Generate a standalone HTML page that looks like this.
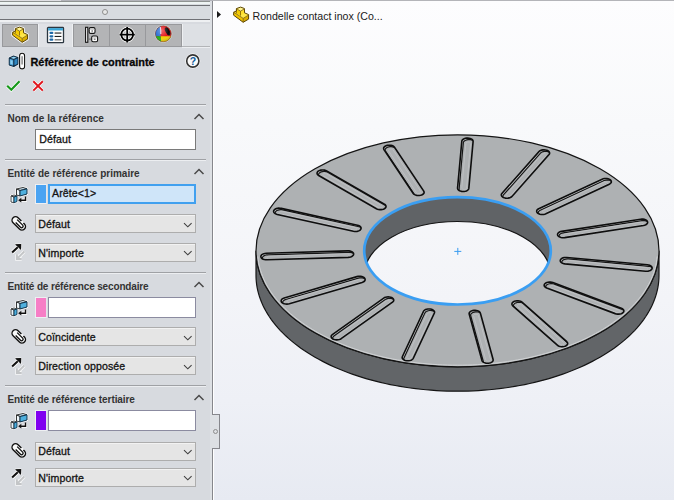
<!DOCTYPE html>
<html><head><meta charset="utf-8">
<style>
*{box-sizing:border-box}
html,body{margin:0;padding:0}
body{width:674px;height:500px;overflow:hidden;position:relative;font-family:"Liberation Sans",sans-serif;background:#fff}
.abs{position:absolute}
#panel{left:0;top:0;width:212px;height:500px;background:#d7dadf}
#vp{left:213px;top:0;width:461px;height:500px;background:linear-gradient(#fdfdfe 0%,#f8f9fb 25%,#f3f4f8 60%,#eef0f6 80%,#e7eaf2 100%)}
.sep{position:absolute;left:5px;width:201px;height:1px;background:#9fa1a5;box-shadow:0 1px 0 #eceef1}
.hdr{position:absolute;left:7.4px;font-size:10px;font-weight:bold;color:#333;white-space:nowrap;letter-spacing:-0.05px}
.chev{position:absolute;left:194px;width:10px;height:6px}
.inp{position:absolute;background:#fff;border:1px solid #7a7a7a}
.dd{position:absolute;left:35px;width:161px;height:19px;background:#e5e5e5;border:1px solid #adadad;box-shadow:inset 0 1px 0 #f2f2f2}
.txt{position:absolute;font-size:10.6px;color:#121212;white-space:nowrap;-webkit-text-stroke:0.3px #141414;letter-spacing:0.1px}
.sw{position:absolute;left:35px;width:12px;height:20px;border:1px solid #eef0f3;border-right-color:#e4e6ea}
</style></head><body>
<div id="panel" class="abs">
  <!-- top bars -->
  <div class="abs" style="left:0;top:0;width:61px;height:1px;background:#e0dfe4"></div>
  <div class="abs" style="left:61px;top:0;width:152px;height:1px;background:#b3b3ba"></div>
  <div class="abs" style="left:0;top:1px;width:212px;height:1px;background:#8f9392"></div>
  <div class="abs" style="left:0;top:2px;width:210px;height:2px;background:#eef3f3"></div>
  <div class="abs" style="left:0;top:5px;width:210px;height:1px;background:#6e6f74"></div>
  <div class="abs" style="left:0;top:6px;width:210px;height:13px;background:#d8dbe0"></div>
  <div class="abs" style="left:102px;top:9px;width:6px;height:6px;border-radius:50%;border:1px solid #8d8d8d;background:#e8e8e8"></div>
  <div class="abs" style="left:0;top:19px;width:210px;height:1px;background:#707176"></div>
  <div class="abs" style="left:0;top:20px;width:210px;height:2px;background:#eef0f2"></div>
  <!-- tabs -->
  <div class="abs" style="left:2px;top:24px;width:36px;height:23px;background:#b3b4b6;border:1px solid #98999c"></div>
  <div class="abs" style="left:38px;top:24px;width:35px;height:23px;background:#e0e2e6;border-left:1px solid #eef0f2;border-right:1px solid #eef0f2"></div>
  <div class="abs" style="left:73px;top:24px;width:37px;height:23px;background:#b3b4b6;border:1px solid #98999c"></div>
  <div class="abs" style="left:109px;top:24px;width:37px;height:23px;background:#b3b4b6;border:1px solid #98999c"></div>
  <div class="abs" style="left:145px;top:24px;width:37px;height:23px;background:#b3b4b6;border:1px solid #98999c"></div>
  <div class="abs" style="left:182px;top:24px;width:28px;height:22px;background:#dde0e4;border-left:1px solid #eef0f2"></div>
  <div class="abs" style="left:182px;top:46px;width:28px;height:1px;background:#b3b5b8"></div>
  <div class="abs" style="left:182px;top:47px;width:28px;height:1px;background:#eceef1"></div>
  <svg class="abs" style="left:9px;top:24px;overflow:visible" width="22" height="22" viewBox="0 0 22 22"><g transform="scale(1.0)"><path d="M6.4 4.6 L10.6 3.1 L14.4 4.5 L14.5 8.8 L18.6 10.6 L18.6 15.1 L13.2 18.3 L3.6 11.2 L3.7 8.2 L6.4 7 Z" fill="#fff" stroke="#fff" stroke-width="2.6" stroke-linejoin="round" opacity="0.9"/><path d="M3.7 8.2 L13.2 14.4 L13.2 18.3 L3.6 11.2 Z" fill="#efc300"/><path d="M13.2 14.4 L18.6 11 L18.6 15.1 L13.2 18.3 Z" fill="#dcae00"/><path d="M3.7 8.2 L6.4 7 L14.5 8.8 L18.6 11 L13.2 14.4 Z" fill="#ffe84a"/><path d="M6.4 4.6 L10.5 7.2 L10.5 11.6 L6.4 9.2 Z" fill="#f5cb00"/><path d="M10.5 7.2 L14.4 4.9 L14.5 9.3 L10.5 11.6 Z" fill="#ffe030"/><path d="M6.4 4.6 L10.6 3.1 L14.4 4.9 L10.5 7.2 Z" fill="#fff490"/><path d="M6.4 4.6 L10.6 3.1 L14.4 4.5 L14.5 8.8 L18.6 10.6 L18.6 15.1 L13.2 18.3 L3.6 11.2 L3.7 8.2 L6.4 7 Z" fill="none" stroke="#5a4300" stroke-width="1" stroke-linejoin="round"/><path d="M3.7 8.2 L13.2 14.4 L18.6 11 M13.2 14.4 V18.3 M6.4 4.6 L10.5 7.2 L14.4 4.9 M10.5 7.2 V11.6 M6.4 7 V9.2" fill="none" stroke="#7a5c00" stroke-width="0.8" stroke-linejoin="round"/></g></svg><svg class="abs" style="left:46px;top:26px;overflow:visible" width="18" height="18" viewBox="0 0 18 18"><rect x="1.5" y="1.5" width="16" height="15.2" rx="0.8" fill="#fff" stroke="#2b3640" stroke-width="1.3"/><rect x="2.1" y="2.1" width="14.8" height="2.4" fill="#3aa6d6"/><rect x="3.4" y="5.8" width="4" height="2.2" rx="1.1" fill="#1e68a6"/><rect x="8.6" y="6.5" width="6.8" height="1.1" fill="#1c1c1c"/><rect x="3.4" y="9.2" width="4" height="2.2" rx="1.1" fill="#1e68a6"/><rect x="8.6" y="9.9" width="6.8" height="1.1" fill="#1c1c1c"/><rect x="3.4" y="12.6" width="4" height="2.2" rx="1.1" fill="#1e68a6"/><rect x="8.6" y="13.3" width="6.8" height="1.1" fill="#555"/></svg><svg class="abs" style="left:84px;top:26px;overflow:visible" width="15" height="17" viewBox="0 0 15 17"><rect x="1.6" y="1.3" width="2.2" height="15" fill="#fff" stroke="#111" stroke-width="1.1"/><path d="M3.8 4.6 H5.4 M3.8 13.2 H7.8" stroke="#777" stroke-width="1.2"/><rect x="5.2" y="1.6" width="5.8" height="5.8" rx="1.4" fill="#fff" stroke="#111" stroke-width="1.1"/><path d="M5.7 3.4 H10.5" stroke="#bbb" stroke-width="0.8"/><rect x="7.4" y="4.2" width="1.6" height="1.6" fill="#888"/><rect x="7.7" y="10" width="5.9" height="5.7" rx="1.4" fill="#fff" stroke="#111" stroke-width="1.1"/><path d="M8.2 11.8 H13.1" stroke="#bbb" stroke-width="0.8"/><rect x="9.8" y="12.5" width="1.8" height="1.5" fill="#888"/></svg><svg class="abs" style="left:118px;top:26px;overflow:visible" width="18" height="18" viewBox="0 0 18 18"><g stroke="#fff" stroke-width="3.4" fill="none"><circle cx="9.2" cy="8.6" r="5.9"/><path d="M1.6 8.6 H16.8 M9.2 1 V16.4"/></g><g stroke="#000" stroke-width="1.8" fill="none"><circle cx="9.2" cy="8.6" r="5.9"/><path d="M1.6 8.6 H16.8 M9.2 1 V16.4"/></g></svg><svg class="abs" style="left:154px;top:25px;overflow:visible" width="19" height="18" viewBox="0 0 19 18"><defs><radialGradient id="bsh" cx="0.4" cy="0.3" r="0.8"><stop offset="0" stop-color="#fff" stop-opacity="0.35"/><stop offset="0.55" stop-color="#fff" stop-opacity="0"/><stop offset="1" stop-color="#000" stop-opacity="0.35"/></radialGradient><clipPath id="bcl"><circle cx="9.4" cy="8.8" r="8"/></clipPath></defs><circle cx="9.4" cy="8.8" r="8.9" fill="#fff" opacity="0.5"/><g clip-path="url(#bcl)"><rect x="0" y="0" width="20" height="20" fill="#e3161b"/><path d="M0 0 H6.6 L6.6 11.2 H0 Z" fill="#2d6fd2"/><path d="M5.6 2 Q6.6 5 6.2 9 L7.4 9 Q7.6 5 6.8 2 Z" fill="#f4f4ff" opacity="0.8"/><ellipse cx="13.6" cy="6.3" rx="2.1" ry="4.4" transform="rotate(-28 13.6 6.3)" fill="#0b0b0b"/><path d="M6.6 11.2 H20 V20 H6.2 Z" fill="#f0d200"/><path d="M0 11.2 H6.6 L7.4 20 H0 Z" fill="#17b51a"/><circle cx="9.4" cy="8.8" r="8" fill="url(#bsh)"/></g><circle cx="9.4" cy="8.8" r="8" fill="none" stroke="#5a4a30" stroke-width="0.6" opacity="0.7"/></svg>
  <!-- title -->
  <svg class="abs" style="left:7px;top:52px;overflow:visible" width="20" height="18" viewBox="0 0 20 18"><path d="M2.2 6 L6.5 4 L11 5.5 L11 12 L6.8 14.5 L2.2 13 Z" fill="#fff" stroke="#fff" stroke-width="2"/><path d="M2.2 6 L6.5 4 L11 5.5 L6.8 7.5 Z" fill="#8fd0f0"/><path d="M2.2 6 L6.8 7.5 V14.5 L2.2 13 Z" fill="#4aa2d6"/><path d="M6.8 7.5 L11 5.5 V12 L6.8 14.5 Z" fill="#2f86c0"/><path d="M3.4 8 L5.6 8.7 V12.4 L3.4 11.8 Z" fill="#8dd0f2"/><path d="M2.2 6 L6.5 4 L11 5.5 L11 12 L6.8 14.5 L2.2 13 Z M2.2 6 L6.8 7.5 L11 5.5 M6.8 7.5 V14.5" fill="none" stroke="#0f2c45" stroke-width="1.1" stroke-linejoin="round"/><rect x="12.6" y="1.3" width="5" height="15.6" rx="2.5" fill="#fff" stroke="#fff" stroke-width="1.6"/><rect x="12.6" y="1.3" width="5" height="15.6" rx="2.5" fill="none" stroke="#111" stroke-width="1.1"/><path d="M15.1 4.2 V12.5" stroke="#8a8a8a" stroke-width="1.5"/></svg>
  <div class="abs" style="left:30.5px;top:55.5px;font-size:10.9px;font-weight:bold;color:#080808;white-space:nowrap;-webkit-text-stroke:0.3px #080808">Référence de contrainte</div>
  <svg class="abs" style="left:185px;top:53px;overflow:visible" width="16" height="16" viewBox="0 0 16 16"><circle cx="7.8" cy="8" r="6.1" fill="#fafafa" stroke="#fff" stroke-width="2.8"/><circle cx="7.8" cy="8" r="6.1" fill="#fafafa" stroke="#333" stroke-width="1.6"/><text x="7.9" y="11.7" font-family="Liberation Sans" font-weight="bold" font-size="10.5" fill="#0f5a9c" text-anchor="middle">?</text></svg>
  <svg class="abs" style="left:5px;top:79px;overflow:visible" width="18" height="14" viewBox="0 0 18 14"><path d="M2.2 6.8 L6.3 10.8 L14.5 2.2" fill="none" stroke="#fff" stroke-width="3.6"/><path d="M2.2 6.8 L6.3 10.8 L14.5 2.2" fill="none" stroke="#16981a" stroke-width="2.2"/></svg><svg class="abs" style="left:31px;top:79px;overflow:visible" width="14" height="14" viewBox="0 0 14 14"><path d="M2.3 2.2 L11.8 11.6 M11.8 2.2 L2.3 11.6" fill="none" stroke="#fff" stroke-width="3.2"/><path d="M2.3 2.2 L11.8 11.6 M11.8 2.2 L2.3 11.6" fill="none" stroke="#e0141c" stroke-width="1.9"/></svg>
  <div class="sep" style="top:104px"></div>
  <div class="hdr" style="top:113px;letter-spacing:0.05px">Nom de la référence</div>
  <svg class="abs" style="left:193px;top:113px;overflow:visible" width="12" height="8" viewBox="0 0 12 8"><path d="M1.5 6 L6 1.5 L10.5 6" fill="none" stroke="#4a4a4a" stroke-width="1.5"/></svg>
  <div class="inp" style="left:35px;top:129px;width:161px;height:21px"></div>
  <div class="txt" style="left:39.3px;top:133px">Défaut</div>
  <div class="sep" style="top:159px"></div>
  <div class="hdr" style="top:168px;letter-spacing:0px">Entité de référence primaire</div>
  <svg class="abs" style="left:193px;top:168px;overflow:visible" width="12" height="8" viewBox="0 0 12 8"><path d="M1.5 6 L6 1.5 L10.5 6" fill="none" stroke="#4a4a4a" stroke-width="1.5"/></svg>
  <svg class="abs" style="left:9px;top:187px;overflow:visible" width="20" height="18" viewBox="0 0 20 18"><g stroke="#fff" stroke-width="2.2" stroke-linejoin="round" fill="#fff"><path d="M7.5 2 L14 0.5 L18 1.8 L18 7 L11 9 L7.5 8 Z"/><path d="M2 9 L5 8 L8 9 L8 14.5 L5 15.8 L2 15 Z"/></g><path d="M7.5 2 L14 0.5 L18 1.8 L11 3.5 Z" fill="#cfe6f2" stroke="#222" stroke-width="0.9" stroke-linejoin="round"/><path d="M7.5 2 L11 3.5 L11 9 L7.5 8 Z" fill="#eef6fa" stroke="#222" stroke-width="0.9" stroke-linejoin="round"/><path d="M11 3.5 L18 1.8 L18 7 L11 9 Z" fill="#4fb0de" stroke="#10324a" stroke-width="1" stroke-linejoin="round"/><path d="M2 9 L5 8 L8 9 L5 10 Z" fill="#d8ecf5" stroke="#222" stroke-width="0.8" stroke-linejoin="round"/><path d="M2 9 L5 10 L5 15.8 L2 15 Z" fill="#eaf5fa" stroke="#222" stroke-width="0.8" stroke-linejoin="round"/><path d="M5 10 L8 9 L8 14.5 L5 15.8 Z" fill="#4aaedd" stroke="#10324a" stroke-width="0.9" stroke-linejoin="round"/><path d="M16.5 10 V13.2 H11" fill="none" stroke="#fff" stroke-width="3"/><path d="M16.5 9.5 V13.2 H11.5" fill="none" stroke="#111" stroke-width="1.5"/><path d="M9.2 13.2 L12.3 10.8 V15.6 Z" fill="#111"/></svg>
  <div class="sw" style="top:184px;background:#4aa3f2"></div>
  <div class="inp" style="left:48px;top:184px;width:148px;height:20px;background:#cfe5f9;border:2px solid #41a0ef"></div>
  <div class="txt" style="left:52px;top:187px">Arête&lt;1&gt;</div>
  <svg class="abs" style="left:10px;top:214px;overflow:visible" width="18" height="19" viewBox="0 0 18 19"><g transform="rotate(-45 8.75 9.4)"><rect x="4.4" y="0.6" width="8.7" height="17.6" rx="4.35" fill="#fff" opacity="0.85"/><path d="M12.3 9.6 V4.9 A3.55 3.55 0 0 0 5.2 4.9 V13.9 A3.55 3.55 0 0 0 12.3 13.9 V12.4" fill="none" stroke="#111" stroke-width="1.45"/><path d="M10.3 5.6 V13.4 A1.55 1.55 0 0 1 7.2 13.4 V6.6" fill="none" stroke="#111" stroke-width="1.3"/></g></svg>
  <div class="dd" style="top:214px"></div>
  <div class="txt" style="left:38.2px;top:218px">Défaut</div>
  <svg class="abs" style="left:183px;top:222px;overflow:visible" width="10" height="7" viewBox="0 0 10 7"><path d="M1 1.2 L4.8 4.8 L8.6 1.2" fill="none" stroke="#3f3f3f" stroke-width="1.1"/></svg>
  <svg class="abs" style="left:10px;top:242px;overflow:visible" width="18" height="20" viewBox="0 0 18 20"><path d="M14.3 9.5 L7.2 16.7 M6.9 12.2 V17 H11.7" fill="none" stroke="#fff" stroke-width="3.4" opacity="0.8"/><path d="M14.3 9.5 L7.2 16.7 M6.9 12.2 V17 H11.7" fill="none" stroke="#c3c5c7" stroke-width="1.9"/><path d="M2 10.7 L10 3.2" fill="none" stroke="#fff" stroke-width="3.8"/><path d="M2.1 10.6 L9.6 3.6" fill="none" stroke="#111" stroke-width="2.1"/><path d="M5 2.2 L11.2 2 L11 8 Z" fill="#111" stroke="#fff" stroke-width="0.9" stroke-linejoin="round"/><path d="M5 2.2 L11.2 2 L11 8 Z" fill="#111"/></svg>
  <div class="dd" style="top:243px"></div>
  <div class="txt" style="left:38.2px;top:247px">N'importe</div>
  <svg class="abs" style="left:183px;top:250px;overflow:visible" width="10" height="7" viewBox="0 0 10 7"><path d="M1 1.2 L4.8 4.8 L8.6 1.2" fill="none" stroke="#3f3f3f" stroke-width="1.1"/></svg>
  <div class="sep" style="top:272px"></div>
  <div class="hdr" style="top:281px;letter-spacing:-0.15px">Entité de référence secondaire</div>
  <svg class="abs" style="left:193px;top:281px;overflow:visible" width="12" height="8" viewBox="0 0 12 8"><path d="M1.5 6 L6 1.5 L10.5 6" fill="none" stroke="#4a4a4a" stroke-width="1.5"/></svg>
  <svg class="abs" style="left:9px;top:300px;overflow:visible" width="20" height="18" viewBox="0 0 20 18"><g stroke="#fff" stroke-width="2.2" stroke-linejoin="round" fill="#fff"><path d="M7.5 2 L14 0.5 L18 1.8 L18 7 L11 9 L7.5 8 Z"/><path d="M2 9 L5 8 L8 9 L8 14.5 L5 15.8 L2 15 Z"/></g><path d="M7.5 2 L14 0.5 L18 1.8 L11 3.5 Z" fill="#cfe6f2" stroke="#222" stroke-width="0.9" stroke-linejoin="round"/><path d="M7.5 2 L11 3.5 L11 9 L7.5 8 Z" fill="#eef6fa" stroke="#222" stroke-width="0.9" stroke-linejoin="round"/><path d="M11 3.5 L18 1.8 L18 7 L11 9 Z" fill="#4fb0de" stroke="#10324a" stroke-width="1" stroke-linejoin="round"/><path d="M2 9 L5 8 L8 9 L5 10 Z" fill="#d8ecf5" stroke="#222" stroke-width="0.8" stroke-linejoin="round"/><path d="M2 9 L5 10 L5 15.8 L2 15 Z" fill="#eaf5fa" stroke="#222" stroke-width="0.8" stroke-linejoin="round"/><path d="M5 10 L8 9 L8 14.5 L5 15.8 Z" fill="#4aaedd" stroke="#10324a" stroke-width="0.9" stroke-linejoin="round"/><path d="M16.5 10 V13.2 H11" fill="none" stroke="#fff" stroke-width="3"/><path d="M16.5 9.5 V13.2 H11.5" fill="none" stroke="#111" stroke-width="1.5"/><path d="M9.2 13.2 L12.3 10.8 V15.6 Z" fill="#111"/></svg>
  <div class="sw" style="top:297px;height:21px;background:#f67ec6"></div>
  <div class="inp" style="left:48px;top:297px;width:148px;height:21px;border-color:#8b8ba0"></div>
  <svg class="abs" style="left:10px;top:327px;overflow:visible" width="18" height="19" viewBox="0 0 18 19"><g transform="rotate(-45 8.75 9.4)"><rect x="4.4" y="0.6" width="8.7" height="17.6" rx="4.35" fill="#fff" opacity="0.85"/><path d="M12.3 9.6 V4.9 A3.55 3.55 0 0 0 5.2 4.9 V13.9 A3.55 3.55 0 0 0 12.3 13.9 V12.4" fill="none" stroke="#111" stroke-width="1.45"/><path d="M10.3 5.6 V13.4 A1.55 1.55 0 0 1 7.2 13.4 V6.6" fill="none" stroke="#111" stroke-width="1.3"/></g></svg>
  <div class="dd" style="top:327px"></div>
  <div class="txt" style="left:38.2px;top:331px">Coïncidente</div>
  <svg class="abs" style="left:183px;top:335px;overflow:visible" width="10" height="7" viewBox="0 0 10 7"><path d="M1 1.2 L4.8 4.8 L8.6 1.2" fill="none" stroke="#3f3f3f" stroke-width="1.1"/></svg>
  <svg class="abs" style="left:10px;top:356px;overflow:visible" width="18" height="20" viewBox="0 0 18 20"><path d="M14.3 9.5 L7.2 16.7 M6.9 12.2 V17 H11.7" fill="none" stroke="#fff" stroke-width="3.4" opacity="0.8"/><path d="M14.3 9.5 L7.2 16.7 M6.9 12.2 V17 H11.7" fill="none" stroke="#c3c5c7" stroke-width="1.9"/><path d="M2 10.7 L10 3.2" fill="none" stroke="#fff" stroke-width="3.8"/><path d="M2.1 10.6 L9.6 3.6" fill="none" stroke="#111" stroke-width="2.1"/><path d="M5 2.2 L11.2 2 L11 8 Z" fill="#111" stroke="#fff" stroke-width="0.9" stroke-linejoin="round"/><path d="M5 2.2 L11.2 2 L11 8 Z" fill="#111"/></svg>
  <div class="dd" style="top:356px"></div>
  <div class="txt" style="left:38.2px;top:360px">Direction opposée</div>
  <svg class="abs" style="left:183px;top:364px;overflow:visible" width="10" height="7" viewBox="0 0 10 7"><path d="M1 1.2 L4.8 4.8 L8.6 1.2" fill="none" stroke="#3f3f3f" stroke-width="1.1"/></svg>
  <div class="sep" style="top:385px"></div>
  <div class="hdr" style="top:394px;letter-spacing:-0.07px">Entité de référence tertiaire</div>
  <svg class="abs" style="left:193px;top:394px;overflow:visible" width="12" height="8" viewBox="0 0 12 8"><path d="M1.5 6 L6 1.5 L10.5 6" fill="none" stroke="#4a4a4a" stroke-width="1.5"/></svg>
  <svg class="abs" style="left:9px;top:413px;overflow:visible" width="20" height="18" viewBox="0 0 20 18"><g stroke="#fff" stroke-width="2.2" stroke-linejoin="round" fill="#fff"><path d="M7.5 2 L14 0.5 L18 1.8 L18 7 L11 9 L7.5 8 Z"/><path d="M2 9 L5 8 L8 9 L8 14.5 L5 15.8 L2 15 Z"/></g><path d="M7.5 2 L14 0.5 L18 1.8 L11 3.5 Z" fill="#cfe6f2" stroke="#222" stroke-width="0.9" stroke-linejoin="round"/><path d="M7.5 2 L11 3.5 L11 9 L7.5 8 Z" fill="#eef6fa" stroke="#222" stroke-width="0.9" stroke-linejoin="round"/><path d="M11 3.5 L18 1.8 L18 7 L11 9 Z" fill="#4fb0de" stroke="#10324a" stroke-width="1" stroke-linejoin="round"/><path d="M2 9 L5 8 L8 9 L5 10 Z" fill="#d8ecf5" stroke="#222" stroke-width="0.8" stroke-linejoin="round"/><path d="M2 9 L5 10 L5 15.8 L2 15 Z" fill="#eaf5fa" stroke="#222" stroke-width="0.8" stroke-linejoin="round"/><path d="M5 10 L8 9 L8 14.5 L5 15.8 Z" fill="#4aaedd" stroke="#10324a" stroke-width="0.9" stroke-linejoin="round"/><path d="M16.5 10 V13.2 H11" fill="none" stroke="#fff" stroke-width="3"/><path d="M16.5 9.5 V13.2 H11.5" fill="none" stroke="#111" stroke-width="1.5"/><path d="M9.2 13.2 L12.3 10.8 V15.6 Z" fill="#111"/></svg>
  <div class="sw" style="top:410px;height:21px;background:#8000f0"></div>
  <div class="inp" style="left:48px;top:410px;width:148px;height:21px;border-color:#8b8ba0"></div>
  <svg class="abs" style="left:10px;top:441px;overflow:visible" width="18" height="19" viewBox="0 0 18 19"><g transform="rotate(-45 8.75 9.4)"><rect x="4.4" y="0.6" width="8.7" height="17.6" rx="4.35" fill="#fff" opacity="0.85"/><path d="M12.3 9.6 V4.9 A3.55 3.55 0 0 0 5.2 4.9 V13.9 A3.55 3.55 0 0 0 12.3 13.9 V12.4" fill="none" stroke="#111" stroke-width="1.45"/><path d="M10.3 5.6 V13.4 A1.55 1.55 0 0 1 7.2 13.4 V6.6" fill="none" stroke="#111" stroke-width="1.3"/></g></svg>
  <div class="dd" style="top:442px"></div>
  <div class="txt" style="left:38.2px;top:445px">Défaut</div>
  <svg class="abs" style="left:183px;top:449px;overflow:visible" width="10" height="7" viewBox="0 0 10 7"><path d="M1 1.2 L4.8 4.8 L8.6 1.2" fill="none" stroke="#3f3f3f" stroke-width="1.1"/></svg>
  <svg class="abs" style="left:10px;top:467px;overflow:visible" width="18" height="20" viewBox="0 0 18 20"><path d="M14.3 9.5 L7.2 16.7 M6.9 12.2 V17 H11.7" fill="none" stroke="#fff" stroke-width="3.4" opacity="0.8"/><path d="M14.3 9.5 L7.2 16.7 M6.9 12.2 V17 H11.7" fill="none" stroke="#c3c5c7" stroke-width="1.9"/><path d="M2 10.7 L10 3.2" fill="none" stroke="#fff" stroke-width="3.8"/><path d="M2.1 10.6 L9.6 3.6" fill="none" stroke="#111" stroke-width="2.1"/><path d="M5 2.2 L11.2 2 L11 8 Z" fill="#111" stroke="#fff" stroke-width="0.9" stroke-linejoin="round"/><path d="M5 2.2 L11.2 2 L11 8 Z" fill="#111"/></svg>
  <div class="dd" style="top:468px"></div>
  <div class="txt" style="left:38.2px;top:472px">N'importe</div>
  <svg class="abs" style="left:183px;top:475px;overflow:visible" width="10" height="7" viewBox="0 0 10 7"><path d="M1 1.2 L4.8 4.8 L8.6 1.2" fill="none" stroke="#3f3f3f" stroke-width="1.1"/></svg>
</div>
<div id="vp" class="abs"></div>
<div class="abs" style="left:210px;top:1px;width:2px;height:499px;background:#dde0e4"></div>
<div class="abs" style="left:212px;top:1px;width:1px;height:499px;background:#86878c"></div>
<div class="abs" style="left:213px;top:0;width:1px;height:500px;background:#ffffff"></div>
<!-- splitter tab -->
<div class="abs" style="left:212px;top:414px;width:8px;height:35px;background:#dde0e4;border:1px solid #86878c;border-left:none"></div>
<div class="abs" style="left:213px;top:429px;width:5px;height:5px;border-radius:50%;border:1px solid #8d8d8d"></div>
<!-- tree item -->
<div class="abs" style="left:213px;top:0;width:461px;height:1px;background:#b4b5b9"></div>
<svg class="abs" style="left:216px;top:10px" width="6" height="9"><path d="M1 1 L5 4.5 L1 8 Z" fill="#1b1b1b"/></svg>
<svg class="abs" style="left:230px;top:4px;overflow:visible" width="22" height="22" viewBox="0 0 22 22"><g transform="scale(1.0)"><path d="M6.4 4.6 L10.6 3.1 L14.4 4.5 L14.5 8.8 L18.6 10.6 L18.6 15.1 L13.2 18.3 L3.6 11.2 L3.7 8.2 L6.4 7 Z" fill="#fff" stroke="#fff" stroke-width="2.6" stroke-linejoin="round" opacity="0.9"/><path d="M3.7 8.2 L13.2 14.4 L13.2 18.3 L3.6 11.2 Z" fill="#efc300"/><path d="M13.2 14.4 L18.6 11 L18.6 15.1 L13.2 18.3 Z" fill="#dcae00"/><path d="M3.7 8.2 L6.4 7 L14.5 8.8 L18.6 11 L13.2 14.4 Z" fill="#ffe84a"/><path d="M6.4 4.6 L10.5 7.2 L10.5 11.6 L6.4 9.2 Z" fill="#f5cb00"/><path d="M10.5 7.2 L14.4 4.9 L14.5 9.3 L10.5 11.6 Z" fill="#ffe030"/><path d="M6.4 4.6 L10.6 3.1 L14.4 4.9 L10.5 7.2 Z" fill="#fff490"/><path d="M6.4 4.6 L10.6 3.1 L14.4 4.5 L14.5 8.8 L18.6 10.6 L18.6 15.1 L13.2 18.3 L3.6 11.2 L3.7 8.2 L6.4 7 Z" fill="none" stroke="#5a4300" stroke-width="1" stroke-linejoin="round"/><path d="M3.7 8.2 L13.2 14.4 L18.6 11 M13.2 14.4 V18.3 M6.4 4.6 L10.5 7.2 L14.4 4.9 M10.5 7.2 V11.6 M6.4 7 V9.2" fill="none" stroke="#7a5c00" stroke-width="0.8" stroke-linejoin="round"/></g></svg>
<div class="abs" style="left:252.5px;top:10px;font-size:10.6px;color:#1a1a1a;white-space:nowrap">Rondelle contact inox (Co...</div>
<svg class="abs" style="left:0;top:0" width="674" height="500">
<defs><linearGradient id="vpg" x1="0" y1="0" x2="0" y2="500" gradientUnits="userSpaceOnUse"><stop offset="0" stop-color="#fdfdfe"/><stop offset="0.25" stop-color="#f8f9fb"/><stop offset="0.6" stop-color="#f3f4f8"/><stop offset="0.8" stop-color="#eef0f6"/><stop offset="1" stop-color="#e7eaf2"/></linearGradient></defs>
<path d="M659.00,250.80 L658.93,253.84 L658.72,256.87 L658.38,259.90 L657.90,262.93 L657.28,265.94 L656.52,268.95 L655.63,271.94 L654.60,274.92 L653.43,277.88 L652.13,280.82 L650.70,283.75 L649.14,286.65 L647.44,289.52 L645.62,292.37 L643.66,295.19 L641.58,297.98 L639.37,300.74 L637.04,303.46 L634.58,306.15 L632.00,308.80 L629.31,311.41 L626.49,313.98 L623.56,316.50 L620.52,318.98 L617.36,321.42 L614.09,323.80 L610.72,326.14 L607.24,328.42 L603.66,330.65 L599.98,332.82 L596.20,334.94 L592.33,337.00 L588.36,339.01 L584.31,340.95 L580.17,342.83 L575.94,344.65 L571.63,346.40 L567.24,348.09 L562.78,349.71 L558.25,351.26 L553.65,352.74 L548.98,354.16 L544.25,355.50 L539.46,356.77 L534.61,357.97 L529.71,359.10 L524.76,360.15 L519.77,361.12 L514.73,362.02 L509.65,362.85 L504.54,363.59 L499.39,364.27 L494.22,364.86 L489.02,365.37 L483.80,365.81 L478.56,366.16 L473.31,366.44 L468.05,366.64 L462.77,366.76 L457.50,366.80 L452.23,366.76 L446.95,366.64 L441.69,366.44 L436.44,366.16 L431.20,365.81 L425.98,365.37 L420.78,364.86 L415.61,364.27 L410.46,363.59 L405.35,362.85 L400.27,362.02 L395.23,361.12 L390.24,360.15 L385.29,359.10 L380.39,357.97 L375.54,356.77 L370.75,355.50 L366.02,354.16 L361.35,352.74 L356.75,351.26 L352.22,349.71 L347.76,348.09 L343.37,346.40 L339.06,344.65 L334.83,342.83 L330.69,340.95 L326.64,339.01 L322.67,337.00 L318.80,334.94 L315.02,332.82 L311.34,330.65 L307.76,328.42 L304.28,326.14 L300.91,323.80 L297.64,321.42 L294.48,318.98 L291.44,316.50 L288.51,313.98 L285.69,311.41 L283.00,308.80 L280.42,306.15 L277.96,303.46 L275.63,300.74 L273.42,297.98 L271.34,295.19 L269.38,292.37 L267.56,289.52 L265.86,286.65 L264.30,283.75 L262.87,280.82 L261.57,277.88 L260.40,274.92 L259.37,271.94 L258.48,268.95 L257.72,265.94 L257.10,262.93 L256.62,259.90 L256.28,256.87 L256.07,253.84 L256.00,250.80 L256.00,275.20 L256.07,278.24 L256.28,281.27 L256.62,284.30 L257.10,287.33 L257.72,290.34 L258.48,293.35 L259.37,296.34 L260.40,299.32 L261.57,302.28 L262.87,305.22 L264.30,308.15 L265.86,311.05 L267.56,313.92 L269.38,316.77 L271.34,319.59 L273.42,322.38 L275.63,325.14 L277.96,327.86 L280.42,330.55 L283.00,333.20 L285.69,335.81 L288.51,338.38 L291.44,340.90 L294.48,343.38 L297.64,345.82 L300.91,348.20 L304.28,350.54 L307.76,352.82 L311.34,355.05 L315.02,357.22 L318.80,359.34 L322.67,361.40 L326.64,363.41 L330.69,365.35 L334.83,367.23 L339.06,369.05 L343.37,370.80 L347.76,372.49 L352.22,374.11 L356.75,375.66 L361.35,377.14 L366.02,378.56 L370.75,379.90 L375.54,381.17 L380.39,382.37 L385.29,383.50 L390.24,384.55 L395.23,385.52 L400.27,386.42 L405.35,387.25 L410.46,387.99 L415.61,388.67 L420.78,389.26 L425.98,389.77 L431.20,390.21 L436.44,390.56 L441.69,390.84 L446.95,391.04 L452.23,391.16 L457.50,391.20 L462.77,391.16 L468.05,391.04 L473.31,390.84 L478.56,390.56 L483.80,390.21 L489.02,389.77 L494.22,389.26 L499.39,388.67 L504.54,387.99 L509.65,387.25 L514.73,386.42 L519.77,385.52 L524.76,384.55 L529.71,383.50 L534.61,382.37 L539.46,381.17 L544.25,379.90 L548.98,378.56 L553.65,377.14 L558.25,375.66 L562.78,374.11 L567.24,372.49 L571.63,370.80 L575.94,369.05 L580.17,367.23 L584.31,365.35 L588.36,363.41 L592.33,361.40 L596.20,359.34 L599.98,357.22 L603.66,355.05 L607.24,352.82 L610.72,350.54 L614.09,348.20 L617.36,345.82 L620.52,343.38 L623.56,340.90 L626.49,338.38 L629.31,335.81 L632.00,333.20 L634.58,330.55 L637.04,327.86 L639.37,325.14 L641.58,322.38 L643.66,319.59 L645.62,316.77 L647.44,313.92 L649.14,311.05 L650.70,308.15 L652.13,305.22 L653.43,302.28 L654.60,299.32 L655.63,296.34 L656.52,293.35 L657.28,290.34 L657.90,287.33 L658.38,284.30 L658.72,281.27 L658.93,278.24 L659.00,275.20 Z" fill="#626568" stroke="#141414" stroke-width="1.2"/>
<ellipse cx="457.50" cy="250.80" rx="201.50" ry="116.00" fill="#aeb1b3" stroke="#141414" stroke-width="1.2"/>
<path d="M657.15,256.46 L656.84,259.32 L656.40,262.18 L655.84,265.04 L655.15,267.88 L654.33,270.72 L653.39,273.55 L652.33,276.36 L651.14,279.16 L649.82,281.94 L648.39,284.70 L646.83,287.44 L645.15,290.16 L643.35,292.86 L641.43,295.54 L639.39,298.18 L637.23,300.80 L634.96,303.38 L632.57,305.94 L630.07,308.46 L627.46,310.94 L624.74,313.39 L621.91,315.79 L618.98,318.16 L615.94,320.48 L612.79,322.76 L609.55,325.00 L606.21,327.18 L602.77,329.32 L599.23,331.41 L595.61,333.45 L591.89,335.43 L588.09,337.36 L584.20,339.23 L580.23,341.05 L576.19,342.81 L572.06,344.51 L567.86,346.14 L563.59,347.72 L559.25,349.24 L554.84,350.69 L550.37,352.07 L545.84,353.40 L541.25,354.65 L536.61,355.84 L531.92,356.96 L527.18,358.01 L522.39,358.99 L517.56,359.90 L512.70,360.74 L507.79,361.51 L502.86,362.21 L497.89,362.83 L492.90,363.39 L487.89,363.87 L482.85,364.27 L477.80,364.61 L472.74,364.87 L467.66,365.05 L462.58,365.16 L457.50,365.20 L452.42,365.16 L447.34,365.05 L442.26,364.87 L437.20,364.61 L432.15,364.27 L427.11,363.87 L422.10,363.39 L417.11,362.83 L412.14,362.21 L407.21,361.51 L402.30,360.74 L397.44,359.90 L392.61,358.99 L387.82,358.01 L383.08,356.96 L378.39,355.84 L373.75,354.65 L369.16,353.40 L364.63,352.07 L360.16,350.69 L355.75,349.24 L351.41,347.72 L347.14,346.14 L342.94,344.51 L338.81,342.81 L334.77,341.05 L330.80,339.23 L326.91,337.36 L323.11,335.43 L319.39,333.45 L315.77,331.41 L312.23,329.32 L308.79,327.18 L305.45,325.00 L302.21,322.76 L299.06,320.48 L296.02,318.16 L293.09,315.79 L290.26,313.39 L287.54,310.94 L284.93,308.46 L282.43,305.94 L280.04,303.38 L277.77,300.80 L275.61,298.18 L273.57,295.54 L271.65,292.86 L269.85,290.16 L268.17,287.44 L266.61,284.70 L265.18,281.94 L263.86,279.16 L262.67,276.36 L261.61,273.55 L260.67,270.72 L259.85,267.88 L259.16,265.04 L258.60,262.18 L258.16,259.32 L257.85,256.46" fill="none" stroke="#d0d2d4" stroke-width="1"/>
<defs><clipPath id="hole"><ellipse cx="457.50" cy="250.80" rx="93.29" ry="53.71"/></clipPath></defs>
<g clip-path="url(#hole)">
<ellipse cx="457.50" cy="250.80" rx="93.29" ry="53.71" fill="#606366"/>
<ellipse cx="457.50" cy="275.20" rx="93.29" ry="53.71" fill="url(#vpg)" stroke="#141414" stroke-width="1.2"/>
</g>
<ellipse cx="457.50" cy="250.80" rx="93.29" ry="53.71" fill="none" stroke="#3a9ef2" stroke-width="2.7"/>
<clipPath id="slots"><path d="M461.83,141.16 L462.04,140.44 L462.52,139.77 L463.24,139.17 L464.18,138.69 L465.29,138.33 L466.50,138.13 L467.76,138.09 L469.01,138.21 L470.18,138.48 L471.21,138.90 L472.05,139.44 L472.67,140.08 L473.02,140.77 L473.10,141.50 L468.83,188.42 L468.62,189.13 L468.14,189.81 L467.42,190.40 L466.48,190.89 L465.37,191.24 L464.16,191.45 L462.90,191.49 L461.65,191.37 L460.48,191.09 L459.45,190.68 L458.61,190.13 L457.99,189.50 L457.64,188.80 L457.56,188.08 Z M538.96,151.61 L539.66,151.00 L540.57,150.50 L541.65,150.13 L542.86,149.90 L544.11,149.84 L545.37,149.93 L546.55,150.19 L547.60,150.59 L548.48,151.12 L549.12,151.74 L549.51,152.43 L549.63,153.16 L549.46,153.88 L549.01,154.56 L511.97,196.42 L511.27,197.02 L510.36,197.53 L509.27,197.90 L508.07,198.12 L506.81,198.19 L505.56,198.09 L504.38,197.84 L503.32,197.44 L502.45,196.91 L501.80,196.29 L501.41,195.59 L501.30,194.87 L501.47,194.15 L501.91,193.47 Z M602.16,179.18 L603.23,178.79 L604.42,178.54 L605.67,178.46 L606.93,178.53 L608.12,178.77 L609.20,179.15 L610.10,179.66 L610.78,180.27 L611.21,180.96 L611.36,181.68 L611.22,182.40 L610.82,183.09 L610.15,183.71 L609.27,184.23 L545.84,213.80 L544.78,214.19 L543.59,214.43 L542.34,214.52 L541.08,214.44 L539.88,214.21 L538.81,213.83 L537.91,213.32 L537.23,212.70 L536.80,212.02 L536.65,211.30 L536.78,210.57 L537.19,209.88 L537.86,209.27 L538.74,208.75 Z M640.55,219.20 L641.80,219.09 L643.06,219.15 L644.26,219.36 L645.36,219.73 L646.28,220.22 L646.99,220.82 L647.46,221.50 L647.64,222.22 L647.55,222.94 L647.18,223.64 L646.55,224.27 L645.69,224.80 L644.64,225.21 L643.47,225.48 L564.64,237.64 L563.39,237.74 L562.13,237.69 L560.92,237.48 L559.83,237.11 L558.90,236.62 L558.19,236.02 L557.73,235.34 L557.54,234.62 L557.64,233.89 L558.01,233.20 L558.64,232.57 L559.50,232.04 L560.54,231.63 L561.72,231.36 Z M647.38,264.82 L648.59,265.02 L649.71,265.36 L650.66,265.84 L651.40,266.43 L651.90,267.10 L652.12,267.81 L652.07,268.54 L651.73,269.24 L651.13,269.88 L650.30,270.43 L649.28,270.86 L648.12,271.14 L646.87,271.27 L645.61,271.24 L565.01,263.89 L563.79,263.70 L562.68,263.35 L561.73,262.87 L560.98,262.29 L560.49,261.62 L560.26,260.90 L560.32,260.17 L560.65,259.47 L561.25,258.83 L562.08,258.29 L563.11,257.86 L564.27,257.57 L565.51,257.44 L566.77,257.47 Z M621.31,308.17 L622.29,308.63 L623.06,309.21 L623.59,309.87 L623.86,310.58 L623.84,311.31 L623.54,312.01 L622.97,312.66 L622.17,313.22 L621.17,313.67 L620.03,313.98 L618.79,314.13 L617.53,314.12 L616.30,313.94 L615.17,313.62 L546.73,288.03 L545.75,287.57 L544.98,286.99 L544.45,286.33 L544.18,285.62 L544.20,284.89 L544.50,284.19 L545.07,283.54 L545.87,282.98 L546.87,282.53 L548.02,282.23 L549.25,282.07 L550.52,282.08 L551.74,282.26 L552.87,282.58 Z M566.75,341.68 L567.31,342.33 L567.61,343.04 L567.63,343.77 L567.37,344.48 L566.84,345.14 L566.06,345.71 L565.09,346.17 L563.96,346.50 L562.73,346.67 L561.47,346.68 L560.23,346.53 L559.09,346.23 L558.09,345.78 L557.28,345.22 L512.84,305.82 L512.27,305.17 L511.97,304.46 L511.95,303.73 L512.22,303.02 L512.75,302.36 L513.52,301.79 L514.50,301.33 L515.63,301.00 L516.85,300.83 L518.12,300.82 L519.35,300.97 L520.50,301.27 L521.50,301.72 L522.30,302.28 Z M493.11,359.47 L493.17,360.20 L492.94,360.92 L492.45,361.58 L491.70,362.17 L490.75,362.65 L489.64,363.00 L488.42,363.19 L487.16,363.22 L485.92,363.09 L484.75,362.81 L483.73,362.38 L482.90,361.83 L482.30,361.19 L481.97,360.49 L469.20,314.09 L469.14,313.36 L469.37,312.65 L469.87,311.98 L470.61,311.39 L471.56,310.91 L472.67,310.57 L473.89,310.37 L475.15,310.34 L476.39,310.47 L477.56,310.75 L478.58,311.18 L479.41,311.73 L480.01,312.37 L480.34,313.07 Z M413.26,358.41 L412.79,359.08 L412.08,359.68 L411.16,360.18 L410.06,360.54 L408.86,360.76 L407.60,360.81 L406.35,360.70 L405.17,360.44 L404.13,360.03 L403.27,359.49 L402.63,358.86 L402.26,358.17 L402.17,357.44 L402.36,356.73 L423.48,311.35 L423.94,310.67 L424.65,310.07 L425.58,309.57 L426.67,309.21 L427.88,309.00 L429.14,308.94 L430.39,309.05 L431.56,309.32 L432.61,309.72 L433.47,310.26 L434.10,310.89 L434.47,311.58 L434.57,312.31 L434.38,313.03 Z M341.15,338.68 L340.25,339.19 L339.17,339.57 L337.98,339.80 L336.72,339.88 L335.47,339.79 L334.28,339.55 L333.21,339.16 L332.33,338.64 L331.66,338.02 L331.26,337.33 L331.12,336.61 L331.27,335.89 L331.70,335.20 L332.38,334.59 L383.74,298.08 L384.64,297.57 L385.71,297.18 L386.91,296.95 L388.16,296.87 L389.42,296.96 L390.61,297.21 L391.67,297.60 L392.56,298.12 L393.22,298.73 L393.63,299.42 L393.76,300.15 L393.61,300.87 L393.19,301.55 L392.51,302.17 Z M289.35,303.77 L288.17,304.02 L286.92,304.12 L285.66,304.05 L284.46,303.83 L283.37,303.46 L282.46,302.95 L281.77,302.35 L281.32,301.67 L281.15,300.95 L281.27,300.22 L281.66,299.53 L282.30,298.91 L283.18,298.38 L284.23,297.98 L356.94,276.65 L358.13,276.39 L359.38,276.30 L360.64,276.36 L361.84,276.59 L362.92,276.96 L363.84,277.46 L364.53,278.07 L364.98,278.75 L365.15,279.47 L365.03,280.20 L364.64,280.89 L363.99,281.51 L363.12,282.04 L362.07,282.44 Z M266.79,259.81 L265.53,259.76 L264.32,259.56 L263.21,259.20 L262.28,258.72 L261.55,258.12 L261.07,257.45 L260.86,256.73 L260.94,256.01 L261.29,255.31 L261.91,254.67 L262.75,254.13 L263.79,253.71 L264.95,253.44 L266.20,253.32 L347.70,250.86 L348.96,250.90 L350.17,251.11 L351.27,251.46 L352.21,251.95 L352.94,252.54 L353.42,253.22 L353.63,253.93 L353.55,254.66 L353.20,255.36 L352.58,255.99 L351.74,256.53 L350.70,256.95 L349.53,257.23 L348.29,257.35 Z M277.23,214.44 L276.10,214.11 L275.14,213.64 L274.38,213.05 L273.87,212.39 L273.62,211.68 L273.66,210.95 L273.98,210.25 L274.56,209.60 L275.38,209.04 L276.39,208.61 L277.54,208.31 L278.78,208.17 L280.05,208.19 L281.27,208.38 L357.46,225.21 L358.58,225.55 L359.54,226.02 L360.30,226.60 L360.81,227.26 L361.06,227.98 L361.02,228.71 L360.70,229.41 L360.12,230.05 L359.30,230.61 L358.29,231.05 L357.14,231.34 L355.90,231.48 L354.64,231.46 L353.41,231.28 Z M318.70,175.49 L317.91,174.92 L317.36,174.26 L317.08,173.55 L317.08,172.83 L317.36,172.12 L317.91,171.46 L318.70,170.89 L319.69,170.44 L320.82,170.13 L322.06,169.96 L323.32,169.96 L324.55,170.13 L325.69,170.44 L326.68,170.89 L384.38,204.11 L385.17,204.68 L385.72,205.34 L386.00,206.05 L386.00,206.77 L385.72,207.48 L385.17,208.14 L384.38,208.71 L383.39,209.16 L382.26,209.48 L381.02,209.64 L379.76,209.64 L378.53,209.48 L377.39,209.16 L376.40,208.71 Z M383.97,149.60 L383.66,148.89 L383.62,148.17 L383.86,147.45 L384.38,146.79 L385.13,146.21 L386.10,145.73 L387.22,145.40 L388.44,145.22 L389.70,145.20 L390.94,145.34 L392.10,145.63 L393.11,146.07 L393.93,146.62 L394.51,147.27 L423.75,191.13 L424.07,191.83 L424.11,192.56 L423.87,193.27 L423.35,193.94 L422.59,194.52 L421.63,194.99 L420.51,195.32 L419.29,195.51 L418.02,195.53 L416.78,195.39 L415.63,195.09 L414.62,194.66 L413.80,194.10 L413.22,193.46 Z"/></clipPath>
<path d="M461.83,141.16 L462.04,140.44 L462.52,139.77 L463.24,139.17 L464.18,138.69 L465.29,138.33 L466.50,138.13 L467.76,138.09 L469.01,138.21 L470.18,138.48 L471.21,138.90 L472.05,139.44 L472.67,140.08 L473.02,140.77 L473.10,141.50 L468.83,188.42 L468.62,189.13 L468.14,189.81 L467.42,190.40 L466.48,190.89 L465.37,191.24 L464.16,191.45 L462.90,191.49 L461.65,191.37 L460.48,191.09 L459.45,190.68 L458.61,190.13 L457.99,189.50 L457.64,188.80 L457.56,188.08 Z M538.96,151.61 L539.66,151.00 L540.57,150.50 L541.65,150.13 L542.86,149.90 L544.11,149.84 L545.37,149.93 L546.55,150.19 L547.60,150.59 L548.48,151.12 L549.12,151.74 L549.51,152.43 L549.63,153.16 L549.46,153.88 L549.01,154.56 L511.97,196.42 L511.27,197.02 L510.36,197.53 L509.27,197.90 L508.07,198.12 L506.81,198.19 L505.56,198.09 L504.38,197.84 L503.32,197.44 L502.45,196.91 L501.80,196.29 L501.41,195.59 L501.30,194.87 L501.47,194.15 L501.91,193.47 Z M602.16,179.18 L603.23,178.79 L604.42,178.54 L605.67,178.46 L606.93,178.53 L608.12,178.77 L609.20,179.15 L610.10,179.66 L610.78,180.27 L611.21,180.96 L611.36,181.68 L611.22,182.40 L610.82,183.09 L610.15,183.71 L609.27,184.23 L545.84,213.80 L544.78,214.19 L543.59,214.43 L542.34,214.52 L541.08,214.44 L539.88,214.21 L538.81,213.83 L537.91,213.32 L537.23,212.70 L536.80,212.02 L536.65,211.30 L536.78,210.57 L537.19,209.88 L537.86,209.27 L538.74,208.75 Z M640.55,219.20 L641.80,219.09 L643.06,219.15 L644.26,219.36 L645.36,219.73 L646.28,220.22 L646.99,220.82 L647.46,221.50 L647.64,222.22 L647.55,222.94 L647.18,223.64 L646.55,224.27 L645.69,224.80 L644.64,225.21 L643.47,225.48 L564.64,237.64 L563.39,237.74 L562.13,237.69 L560.92,237.48 L559.83,237.11 L558.90,236.62 L558.19,236.02 L557.73,235.34 L557.54,234.62 L557.64,233.89 L558.01,233.20 L558.64,232.57 L559.50,232.04 L560.54,231.63 L561.72,231.36 Z M647.38,264.82 L648.59,265.02 L649.71,265.36 L650.66,265.84 L651.40,266.43 L651.90,267.10 L652.12,267.81 L652.07,268.54 L651.73,269.24 L651.13,269.88 L650.30,270.43 L649.28,270.86 L648.12,271.14 L646.87,271.27 L645.61,271.24 L565.01,263.89 L563.79,263.70 L562.68,263.35 L561.73,262.87 L560.98,262.29 L560.49,261.62 L560.26,260.90 L560.32,260.17 L560.65,259.47 L561.25,258.83 L562.08,258.29 L563.11,257.86 L564.27,257.57 L565.51,257.44 L566.77,257.47 Z M621.31,308.17 L622.29,308.63 L623.06,309.21 L623.59,309.87 L623.86,310.58 L623.84,311.31 L623.54,312.01 L622.97,312.66 L622.17,313.22 L621.17,313.67 L620.03,313.98 L618.79,314.13 L617.53,314.12 L616.30,313.94 L615.17,313.62 L546.73,288.03 L545.75,287.57 L544.98,286.99 L544.45,286.33 L544.18,285.62 L544.20,284.89 L544.50,284.19 L545.07,283.54 L545.87,282.98 L546.87,282.53 L548.02,282.23 L549.25,282.07 L550.52,282.08 L551.74,282.26 L552.87,282.58 Z M566.75,341.68 L567.31,342.33 L567.61,343.04 L567.63,343.77 L567.37,344.48 L566.84,345.14 L566.06,345.71 L565.09,346.17 L563.96,346.50 L562.73,346.67 L561.47,346.68 L560.23,346.53 L559.09,346.23 L558.09,345.78 L557.28,345.22 L512.84,305.82 L512.27,305.17 L511.97,304.46 L511.95,303.73 L512.22,303.02 L512.75,302.36 L513.52,301.79 L514.50,301.33 L515.63,301.00 L516.85,300.83 L518.12,300.82 L519.35,300.97 L520.50,301.27 L521.50,301.72 L522.30,302.28 Z M493.11,359.47 L493.17,360.20 L492.94,360.92 L492.45,361.58 L491.70,362.17 L490.75,362.65 L489.64,363.00 L488.42,363.19 L487.16,363.22 L485.92,363.09 L484.75,362.81 L483.73,362.38 L482.90,361.83 L482.30,361.19 L481.97,360.49 L469.20,314.09 L469.14,313.36 L469.37,312.65 L469.87,311.98 L470.61,311.39 L471.56,310.91 L472.67,310.57 L473.89,310.37 L475.15,310.34 L476.39,310.47 L477.56,310.75 L478.58,311.18 L479.41,311.73 L480.01,312.37 L480.34,313.07 Z M413.26,358.41 L412.79,359.08 L412.08,359.68 L411.16,360.18 L410.06,360.54 L408.86,360.76 L407.60,360.81 L406.35,360.70 L405.17,360.44 L404.13,360.03 L403.27,359.49 L402.63,358.86 L402.26,358.17 L402.17,357.44 L402.36,356.73 L423.48,311.35 L423.94,310.67 L424.65,310.07 L425.58,309.57 L426.67,309.21 L427.88,309.00 L429.14,308.94 L430.39,309.05 L431.56,309.32 L432.61,309.72 L433.47,310.26 L434.10,310.89 L434.47,311.58 L434.57,312.31 L434.38,313.03 Z M341.15,338.68 L340.25,339.19 L339.17,339.57 L337.98,339.80 L336.72,339.88 L335.47,339.79 L334.28,339.55 L333.21,339.16 L332.33,338.64 L331.66,338.02 L331.26,337.33 L331.12,336.61 L331.27,335.89 L331.70,335.20 L332.38,334.59 L383.74,298.08 L384.64,297.57 L385.71,297.18 L386.91,296.95 L388.16,296.87 L389.42,296.96 L390.61,297.21 L391.67,297.60 L392.56,298.12 L393.22,298.73 L393.63,299.42 L393.76,300.15 L393.61,300.87 L393.19,301.55 L392.51,302.17 Z M289.35,303.77 L288.17,304.02 L286.92,304.12 L285.66,304.05 L284.46,303.83 L283.37,303.46 L282.46,302.95 L281.77,302.35 L281.32,301.67 L281.15,300.95 L281.27,300.22 L281.66,299.53 L282.30,298.91 L283.18,298.38 L284.23,297.98 L356.94,276.65 L358.13,276.39 L359.38,276.30 L360.64,276.36 L361.84,276.59 L362.92,276.96 L363.84,277.46 L364.53,278.07 L364.98,278.75 L365.15,279.47 L365.03,280.20 L364.64,280.89 L363.99,281.51 L363.12,282.04 L362.07,282.44 Z M266.79,259.81 L265.53,259.76 L264.32,259.56 L263.21,259.20 L262.28,258.72 L261.55,258.12 L261.07,257.45 L260.86,256.73 L260.94,256.01 L261.29,255.31 L261.91,254.67 L262.75,254.13 L263.79,253.71 L264.95,253.44 L266.20,253.32 L347.70,250.86 L348.96,250.90 L350.17,251.11 L351.27,251.46 L352.21,251.95 L352.94,252.54 L353.42,253.22 L353.63,253.93 L353.55,254.66 L353.20,255.36 L352.58,255.99 L351.74,256.53 L350.70,256.95 L349.53,257.23 L348.29,257.35 Z M277.23,214.44 L276.10,214.11 L275.14,213.64 L274.38,213.05 L273.87,212.39 L273.62,211.68 L273.66,210.95 L273.98,210.25 L274.56,209.60 L275.38,209.04 L276.39,208.61 L277.54,208.31 L278.78,208.17 L280.05,208.19 L281.27,208.38 L357.46,225.21 L358.58,225.55 L359.54,226.02 L360.30,226.60 L360.81,227.26 L361.06,227.98 L361.02,228.71 L360.70,229.41 L360.12,230.05 L359.30,230.61 L358.29,231.05 L357.14,231.34 L355.90,231.48 L354.64,231.46 L353.41,231.28 Z M318.70,175.49 L317.91,174.92 L317.36,174.26 L317.08,173.55 L317.08,172.83 L317.36,172.12 L317.91,171.46 L318.70,170.89 L319.69,170.44 L320.82,170.13 L322.06,169.96 L323.32,169.96 L324.55,170.13 L325.69,170.44 L326.68,170.89 L384.38,204.11 L385.17,204.68 L385.72,205.34 L386.00,206.05 L386.00,206.77 L385.72,207.48 L385.17,208.14 L384.38,208.71 L383.39,209.16 L382.26,209.48 L381.02,209.64 L379.76,209.64 L378.53,209.48 L377.39,209.16 L376.40,208.71 Z M383.97,149.60 L383.66,148.89 L383.62,148.17 L383.86,147.45 L384.38,146.79 L385.13,146.21 L386.10,145.73 L387.22,145.40 L388.44,145.22 L389.70,145.20 L390.94,145.34 L392.10,145.63 L393.11,146.07 L393.93,146.62 L394.51,147.27 L423.75,191.13 L424.07,191.83 L424.11,192.56 L423.87,193.27 L423.35,193.94 L422.59,194.52 L421.63,194.99 L420.51,195.32 L419.29,195.51 L418.02,195.53 L416.78,195.39 L415.63,195.09 L414.62,194.66 L413.80,194.10 L413.22,193.46 Z" fill="#cdd0d2"/>
<g clip-path="url(#slots)"><path d="M463.33,142.66 L463.54,141.94 L464.02,141.27 L464.74,140.67 L465.68,140.19 L466.79,139.83 L468.00,139.63 L469.26,139.59 L470.51,139.71 L471.68,139.98 L472.71,140.40 L473.55,140.94 L474.17,141.58 L474.52,142.27 L474.60,143.00 L470.33,189.92 L470.12,190.63 L469.64,191.31 L468.92,191.90 L467.98,192.39 L466.87,192.74 L465.66,192.95 L464.40,192.99 L463.15,192.87 L461.98,192.59 L460.95,192.18 L460.11,191.63 L459.49,191.00 L459.14,190.30 L459.06,189.58 Z M540.46,153.11 L541.16,152.50 L542.07,152.00 L543.15,151.63 L544.36,151.40 L545.61,151.34 L546.87,151.43 L548.05,151.69 L549.10,152.09 L549.98,152.62 L550.62,153.24 L551.01,153.93 L551.13,154.66 L550.96,155.38 L550.51,156.06 L513.47,197.92 L512.77,198.52 L511.86,199.03 L510.77,199.40 L509.57,199.62 L508.31,199.69 L507.06,199.59 L505.88,199.34 L504.82,198.94 L503.95,198.41 L503.30,197.79 L502.91,197.09 L502.80,196.37 L502.97,195.65 L503.41,194.97 Z M603.66,180.68 L604.73,180.29 L605.92,180.04 L607.17,179.96 L608.43,180.03 L609.62,180.27 L610.70,180.65 L611.60,181.16 L612.28,181.77 L612.71,182.46 L612.86,183.18 L612.72,183.90 L612.32,184.59 L611.65,185.21 L610.77,185.73 L547.34,215.30 L546.28,215.69 L545.09,215.93 L543.84,216.02 L542.58,215.94 L541.38,215.71 L540.31,215.33 L539.41,214.82 L538.73,214.20 L538.30,213.52 L538.15,212.80 L538.28,212.07 L538.69,211.38 L539.36,210.77 L540.24,210.25 Z M642.05,220.70 L643.30,220.59 L644.56,220.65 L645.76,220.86 L646.86,221.23 L647.78,221.72 L648.49,222.32 L648.96,223.00 L649.14,223.72 L649.05,224.44 L648.68,225.14 L648.05,225.77 L647.19,226.30 L646.14,226.71 L644.97,226.98 L566.14,239.14 L564.89,239.24 L563.63,239.19 L562.42,238.98 L561.33,238.61 L560.40,238.12 L559.69,237.52 L559.23,236.84 L559.04,236.12 L559.14,235.39 L559.51,234.70 L560.14,234.07 L561.00,233.54 L562.04,233.13 L563.22,232.86 Z M648.88,266.32 L650.09,266.52 L651.21,266.86 L652.16,267.34 L652.90,267.93 L653.40,268.60 L653.62,269.31 L653.57,270.04 L653.23,270.74 L652.63,271.38 L651.80,271.93 L650.78,272.36 L649.62,272.64 L648.37,272.77 L647.11,272.74 L566.51,265.39 L565.29,265.20 L564.18,264.85 L563.23,264.37 L562.48,263.79 L561.99,263.12 L561.76,262.40 L561.82,261.67 L562.15,260.97 L562.75,260.33 L563.58,259.79 L564.61,259.36 L565.77,259.07 L567.01,258.94 L568.27,258.97 Z M622.81,309.67 L623.79,310.13 L624.56,310.71 L625.09,311.37 L625.36,312.08 L625.34,312.81 L625.04,313.51 L624.47,314.16 L623.67,314.72 L622.67,315.17 L621.53,315.48 L620.29,315.63 L619.03,315.62 L617.80,315.44 L616.67,315.12 L548.23,289.53 L547.25,289.07 L546.48,288.49 L545.95,287.83 L545.68,287.12 L545.70,286.39 L546.00,285.69 L546.57,285.04 L547.37,284.48 L548.37,284.03 L549.52,283.73 L550.75,283.57 L552.02,283.58 L553.24,283.76 L554.37,284.08 Z M568.25,343.18 L568.81,343.83 L569.11,344.54 L569.13,345.27 L568.87,345.98 L568.34,346.64 L567.56,347.21 L566.59,347.67 L565.46,348.00 L564.23,348.17 L562.97,348.18 L561.73,348.03 L560.59,347.73 L559.59,347.28 L558.78,346.72 L514.34,307.32 L513.77,306.67 L513.47,305.96 L513.45,305.23 L513.72,304.52 L514.25,303.86 L515.02,303.29 L516.00,302.83 L517.13,302.50 L518.35,302.33 L519.62,302.32 L520.85,302.47 L522.00,302.77 L523.00,303.22 L523.80,303.78 Z M494.61,360.97 L494.67,361.70 L494.44,362.42 L493.95,363.08 L493.20,363.67 L492.25,364.15 L491.14,364.50 L489.92,364.69 L488.66,364.72 L487.42,364.59 L486.25,364.31 L485.23,363.88 L484.40,363.33 L483.80,362.69 L483.47,361.99 L470.70,315.59 L470.64,314.86 L470.87,314.15 L471.37,313.48 L472.11,312.89 L473.06,312.41 L474.17,312.07 L475.39,311.87 L476.65,311.84 L477.89,311.97 L479.06,312.25 L480.08,312.68 L480.91,313.23 L481.51,313.87 L481.84,314.57 Z M414.76,359.91 L414.29,360.58 L413.58,361.18 L412.66,361.68 L411.56,362.04 L410.36,362.26 L409.10,362.31 L407.85,362.20 L406.67,361.94 L405.63,361.53 L404.77,360.99 L404.13,360.36 L403.76,359.67 L403.67,358.94 L403.86,358.23 L424.98,312.85 L425.44,312.17 L426.15,311.57 L427.08,311.07 L428.17,310.71 L429.38,310.50 L430.64,310.44 L431.89,310.55 L433.06,310.82 L434.11,311.22 L434.97,311.76 L435.60,312.39 L435.97,313.08 L436.07,313.81 L435.88,314.53 Z M342.65,340.18 L341.75,340.69 L340.67,341.07 L339.48,341.30 L338.22,341.38 L336.97,341.29 L335.78,341.05 L334.71,340.66 L333.83,340.14 L333.16,339.52 L332.76,338.83 L332.62,338.11 L332.77,337.39 L333.20,336.70 L333.88,336.09 L385.24,299.58 L386.14,299.07 L387.21,298.68 L388.41,298.45 L389.66,298.37 L390.92,298.46 L392.11,298.71 L393.17,299.10 L394.06,299.62 L394.72,300.23 L395.13,300.92 L395.26,301.65 L395.11,302.37 L394.69,303.05 L394.01,303.67 Z M290.85,305.27 L289.67,305.52 L288.42,305.62 L287.16,305.55 L285.96,305.33 L284.87,304.96 L283.96,304.45 L283.27,303.85 L282.82,303.17 L282.65,302.45 L282.77,301.72 L283.16,301.03 L283.80,300.41 L284.68,299.88 L285.73,299.48 L358.44,278.15 L359.63,277.89 L360.88,277.80 L362.14,277.86 L363.34,278.09 L364.42,278.46 L365.34,278.96 L366.03,279.57 L366.48,280.25 L366.65,280.97 L366.53,281.70 L366.14,282.39 L365.49,283.01 L364.62,283.54 L363.57,283.94 Z M268.29,261.31 L267.03,261.26 L265.82,261.06 L264.71,260.70 L263.78,260.22 L263.05,259.62 L262.57,258.95 L262.36,258.23 L262.44,257.51 L262.79,256.81 L263.41,256.17 L264.25,255.63 L265.29,255.21 L266.45,254.94 L267.70,254.82 L349.20,252.36 L350.46,252.40 L351.67,252.61 L352.77,252.96 L353.71,253.45 L354.44,254.04 L354.92,254.72 L355.13,255.43 L355.05,256.16 L354.70,256.86 L354.08,257.49 L353.24,258.03 L352.20,258.45 L351.03,258.73 L349.79,258.85 Z M278.73,215.94 L277.60,215.61 L276.64,215.14 L275.88,214.55 L275.37,213.89 L275.12,213.18 L275.16,212.45 L275.48,211.75 L276.06,211.10 L276.88,210.54 L277.89,210.11 L279.04,209.81 L280.28,209.67 L281.55,209.69 L282.77,209.88 L358.96,226.71 L360.08,227.05 L361.04,227.52 L361.80,228.10 L362.31,228.76 L362.56,229.48 L362.52,230.21 L362.20,230.91 L361.62,231.55 L360.80,232.11 L359.79,232.55 L358.64,232.84 L357.40,232.98 L356.14,232.96 L354.91,232.78 Z M320.20,176.99 L319.41,176.42 L318.86,175.76 L318.58,175.05 L318.58,174.33 L318.86,173.62 L319.41,172.96 L320.20,172.39 L321.19,171.94 L322.32,171.63 L323.56,171.46 L324.82,171.46 L326.05,171.63 L327.19,171.94 L328.18,172.39 L385.88,205.61 L386.67,206.18 L387.22,206.84 L387.50,207.55 L387.50,208.27 L387.22,208.98 L386.67,209.64 L385.88,210.21 L384.89,210.66 L383.76,210.98 L382.52,211.14 L381.26,211.14 L380.03,210.98 L378.89,210.66 L377.90,210.21 Z M385.47,151.10 L385.16,150.39 L385.12,149.67 L385.36,148.95 L385.88,148.29 L386.63,147.71 L387.60,147.23 L388.72,146.90 L389.94,146.72 L391.20,146.70 L392.44,146.84 L393.60,147.13 L394.61,147.57 L395.43,148.12 L396.01,148.77 L425.25,192.63 L425.57,193.33 L425.61,194.06 L425.37,194.77 L424.85,195.44 L424.09,196.02 L423.13,196.49 L422.01,196.82 L420.79,197.01 L419.52,197.03 L418.28,196.89 L417.13,196.59 L416.12,196.16 L415.30,195.60 L414.72,194.96 Z" fill="#aeb1b3" stroke="#161616" stroke-width="1.2"/>
<path d="M465.89,143.32 L465.98,143.02 L466.18,142.73 L466.49,142.48 L466.88,142.28 L467.35,142.13 L467.85,142.04 L468.38,142.03 L468.91,142.08 L469.40,142.19 L469.83,142.37 L470.19,142.59 L470.45,142.86 L470.59,143.15 L470.63,143.46 L466.57,188.06 L466.48,188.36 L466.28,188.64 L465.97,188.89 L465.58,189.10 L465.12,189.25 L464.61,189.33 L464.08,189.35 L463.55,189.30 L463.06,189.18 L462.63,189.01 L462.27,188.78 L462.01,188.51 L461.87,188.22 L461.83,187.92 Z M541.86,154.40 L542.15,154.14 L542.54,153.93 L542.99,153.77 L543.50,153.68 L544.03,153.65 L544.55,153.69 L545.05,153.80 L545.49,153.97 L545.86,154.19 L546.13,154.45 L546.29,154.74 L546.34,155.05 L546.27,155.35 L546.08,155.64 L510.86,195.43 L510.57,195.68 L510.19,195.89 L509.73,196.05 L509.23,196.15 L508.70,196.17 L508.17,196.13 L507.68,196.02 L507.23,195.86 L506.87,195.64 L506.60,195.37 L506.43,195.08 L506.38,194.78 L506.46,194.48 L506.64,194.19 Z M603.56,182.28 L604.00,182.11 L604.50,182.01 L605.03,181.97 L605.56,182.00 L606.06,182.10 L606.51,182.26 L606.89,182.48 L607.18,182.73 L607.35,183.02 L607.42,183.33 L607.36,183.63 L607.19,183.92 L606.91,184.18 L606.54,184.40 L546.25,212.50 L545.80,212.67 L545.30,212.77 L544.78,212.81 L544.25,212.77 L543.75,212.67 L543.30,212.51 L542.92,212.30 L542.63,212.04 L542.45,211.75 L542.39,211.45 L542.45,211.15 L542.62,210.86 L542.90,210.60 L543.27,210.38 Z M640.35,222.22 L640.87,222.18 L641.40,222.20 L641.91,222.29 L642.37,222.44 L642.76,222.65 L643.05,222.90 L643.25,223.19 L643.33,223.49 L643.29,223.79 L643.13,224.08 L642.87,224.35 L642.51,224.57 L642.07,224.75 L641.57,224.86 L566.64,236.42 L566.11,236.46 L565.59,236.44 L565.08,236.35 L564.62,236.20 L564.23,235.99 L563.93,235.74 L563.74,235.45 L563.66,235.15 L563.70,234.84 L563.85,234.55 L564.12,234.29 L564.48,234.06 L564.92,233.89 L565.41,233.78 Z M645.77,267.40 L646.29,267.48 L646.75,267.63 L647.15,267.83 L647.46,268.08 L647.67,268.36 L647.77,268.66 L647.74,268.96 L647.60,269.26 L647.35,269.53 L647.00,269.76 L646.57,269.94 L646.09,270.06 L645.56,270.11 L645.03,270.10 L568.41,263.11 L567.90,263.03 L567.43,262.89 L567.03,262.68 L566.72,262.44 L566.51,262.16 L566.42,261.86 L566.44,261.55 L566.58,261.26 L566.83,260.99 L567.18,260.76 L567.61,260.58 L568.10,260.46 L568.62,260.40 L569.15,260.42 Z M618.74,310.02 L619.15,310.21 L619.48,310.45 L619.70,310.73 L619.81,311.03 L619.80,311.33 L619.68,311.63 L619.44,311.90 L619.10,312.14 L618.68,312.33 L618.20,312.46 L617.68,312.52 L617.15,312.52 L616.64,312.44 L616.16,312.31 L551.10,287.98 L550.69,287.79 L550.36,287.55 L550.14,287.27 L550.03,286.97 L550.04,286.67 L550.17,286.37 L550.40,286.10 L550.74,285.86 L551.16,285.67 L551.64,285.54 L552.16,285.48 L552.69,285.49 L553.21,285.56 L553.68,285.69 Z M563.81,342.63 L564.04,342.91 L564.17,343.20 L564.18,343.51 L564.07,343.81 L563.84,344.09 L563.52,344.33 L563.11,344.52 L562.63,344.66 L562.12,344.73 L561.59,344.74 L561.07,344.67 L560.59,344.54 L560.17,344.36 L559.83,344.12 L517.58,306.67 L517.34,306.39 L517.22,306.10 L517.21,305.79 L517.32,305.49 L517.54,305.21 L517.87,304.97 L518.28,304.78 L518.75,304.64 L519.27,304.57 L519.80,304.56 L520.32,304.63 L520.80,304.76 L521.22,304.94 L521.55,305.18 Z M490.46,359.52 L490.49,359.83 L490.39,360.13 L490.18,360.41 L489.87,360.66 L489.47,360.86 L489.01,361.00 L488.49,361.08 L487.96,361.10 L487.44,361.04 L486.95,360.92 L486.52,360.74 L486.18,360.51 L485.92,360.24 L485.78,359.95 L473.65,315.84 L473.62,315.53 L473.72,315.23 L473.93,314.95 L474.24,314.71 L474.64,314.50 L475.11,314.36 L475.62,314.28 L476.15,314.26 L476.67,314.32 L477.16,314.44 L477.59,314.62 L477.94,314.85 L478.19,315.12 L478.33,315.41 Z M411.52,357.70 L411.32,357.98 L411.02,358.24 L410.63,358.44 L410.18,358.60 L409.67,358.69 L409.14,358.71 L408.61,358.66 L408.12,358.55 L407.68,358.38 L407.32,358.16 L407.06,357.89 L406.90,357.60 L406.86,357.29 L406.94,356.99 L427.02,313.85 L427.21,313.57 L427.51,313.32 L427.90,313.11 L428.36,312.96 L428.87,312.87 L429.39,312.84 L429.92,312.89 L430.41,313.00 L430.85,313.17 L431.21,313.40 L431.48,313.66 L431.63,313.95 L431.67,314.26 L431.60,314.56 Z M340.77,337.49 L340.40,337.70 L339.95,337.86 L339.44,337.96 L338.92,337.99 L338.39,337.96 L337.89,337.85 L337.44,337.69 L337.07,337.47 L336.79,337.21 L336.62,336.92 L336.56,336.62 L336.63,336.32 L336.81,336.03 L337.09,335.77 L385.91,301.06 L386.29,300.85 L386.74,300.69 L387.24,300.59 L387.77,300.56 L388.30,300.60 L388.80,300.70 L389.25,300.86 L389.62,301.08 L389.90,301.34 L390.07,301.63 L390.12,301.93 L390.06,302.24 L389.88,302.52 L389.60,302.78 Z M290.56,302.46 L290.07,302.57 L289.54,302.61 L289.01,302.58 L288.51,302.49 L288.05,302.33 L287.67,302.12 L287.38,301.87 L287.19,301.58 L287.12,301.28 L287.17,300.97 L287.33,300.68 L287.60,300.42 L287.97,300.20 L288.41,300.03 L357.53,279.76 L358.03,279.65 L358.56,279.61 L359.09,279.63 L359.59,279.73 L360.05,279.89 L360.43,280.10 L360.72,280.35 L360.91,280.64 L360.98,280.94 L360.93,281.24 L360.77,281.54 L360.50,281.80 L360.13,282.02 L359.69,282.19 Z M269.53,258.76 L269.00,258.75 L268.49,258.66 L268.03,258.51 L267.64,258.31 L267.33,258.06 L267.13,257.77 L267.04,257.47 L267.07,257.17 L267.22,256.88 L267.48,256.61 L267.84,256.38 L268.27,256.21 L268.76,256.09 L269.28,256.04 L346.76,253.70 L347.29,253.72 L347.79,253.81 L348.26,253.95 L348.65,254.16 L348.96,254.41 L349.16,254.69 L349.25,254.99 L349.21,255.30 L349.07,255.59 L348.81,255.86 L348.45,256.09 L348.02,256.26 L347.53,256.38 L347.00,256.43 Z M281.18,214.00 L280.71,213.86 L280.30,213.66 L279.99,213.42 L279.77,213.14 L279.67,212.84 L279.68,212.53 L279.82,212.24 L280.06,211.96 L280.40,211.73 L280.83,211.55 L281.31,211.42 L281.83,211.37 L282.36,211.37 L282.88,211.45 L355.30,227.46 L355.77,227.60 L356.18,227.79 L356.50,228.04 L356.71,228.32 L356.81,228.62 L356.80,228.92 L356.67,229.22 L356.42,229.49 L356.08,229.72 L355.65,229.91 L355.17,230.03 L354.65,230.09 L354.12,230.08 L353.60,230.00 Z M323.34,175.88 L323.01,175.64 L322.78,175.36 L322.66,175.06 L322.66,174.76 L322.78,174.46 L323.01,174.19 L323.34,173.95 L323.75,173.76 L324.23,173.62 L324.75,173.56 L325.28,173.56 L325.80,173.62 L326.27,173.76 L326.69,173.95 L381.54,205.53 L381.87,205.76 L382.10,206.04 L382.22,206.34 L382.22,206.64 L382.10,206.94 L381.87,207.22 L381.54,207.46 L381.13,207.65 L380.65,207.78 L380.13,207.85 L379.60,207.85 L379.09,207.78 L378.61,207.65 L378.19,207.46 Z M388.65,150.90 L388.52,150.61 L388.50,150.30 L388.60,150.00 L388.82,149.72 L389.14,149.48 L389.54,149.28 L390.01,149.14 L390.53,149.06 L391.06,149.06 L391.58,149.11 L392.06,149.24 L392.49,149.42 L392.83,149.66 L393.08,149.93 L420.88,191.62 L421.01,191.92 L421.03,192.22 L420.92,192.52 L420.71,192.80 L420.39,193.04 L419.98,193.24 L419.51,193.38 L419.00,193.46 L418.47,193.47 L417.95,193.41 L417.46,193.29 L417.04,193.10 L416.70,192.87 L416.45,192.60 Z" fill="none" stroke="#c4c6c8" stroke-width="0.7"/></g>
<path d="M461.83,141.16 L462.04,140.44 L462.52,139.77 L463.24,139.17 L464.18,138.69 L465.29,138.33 L466.50,138.13 L467.76,138.09 L469.01,138.21 L470.18,138.48 L471.21,138.90 L472.05,139.44 L472.67,140.08 L473.02,140.77 L473.10,141.50 L468.83,188.42 L468.62,189.13 L468.14,189.81 L467.42,190.40 L466.48,190.89 L465.37,191.24 L464.16,191.45 L462.90,191.49 L461.65,191.37 L460.48,191.09 L459.45,190.68 L458.61,190.13 L457.99,189.50 L457.64,188.80 L457.56,188.08 Z M538.96,151.61 L539.66,151.00 L540.57,150.50 L541.65,150.13 L542.86,149.90 L544.11,149.84 L545.37,149.93 L546.55,150.19 L547.60,150.59 L548.48,151.12 L549.12,151.74 L549.51,152.43 L549.63,153.16 L549.46,153.88 L549.01,154.56 L511.97,196.42 L511.27,197.02 L510.36,197.53 L509.27,197.90 L508.07,198.12 L506.81,198.19 L505.56,198.09 L504.38,197.84 L503.32,197.44 L502.45,196.91 L501.80,196.29 L501.41,195.59 L501.30,194.87 L501.47,194.15 L501.91,193.47 Z M602.16,179.18 L603.23,178.79 L604.42,178.54 L605.67,178.46 L606.93,178.53 L608.12,178.77 L609.20,179.15 L610.10,179.66 L610.78,180.27 L611.21,180.96 L611.36,181.68 L611.22,182.40 L610.82,183.09 L610.15,183.71 L609.27,184.23 L545.84,213.80 L544.78,214.19 L543.59,214.43 L542.34,214.52 L541.08,214.44 L539.88,214.21 L538.81,213.83 L537.91,213.32 L537.23,212.70 L536.80,212.02 L536.65,211.30 L536.78,210.57 L537.19,209.88 L537.86,209.27 L538.74,208.75 Z M640.55,219.20 L641.80,219.09 L643.06,219.15 L644.26,219.36 L645.36,219.73 L646.28,220.22 L646.99,220.82 L647.46,221.50 L647.64,222.22 L647.55,222.94 L647.18,223.64 L646.55,224.27 L645.69,224.80 L644.64,225.21 L643.47,225.48 L564.64,237.64 L563.39,237.74 L562.13,237.69 L560.92,237.48 L559.83,237.11 L558.90,236.62 L558.19,236.02 L557.73,235.34 L557.54,234.62 L557.64,233.89 L558.01,233.20 L558.64,232.57 L559.50,232.04 L560.54,231.63 L561.72,231.36 Z M647.38,264.82 L648.59,265.02 L649.71,265.36 L650.66,265.84 L651.40,266.43 L651.90,267.10 L652.12,267.81 L652.07,268.54 L651.73,269.24 L651.13,269.88 L650.30,270.43 L649.28,270.86 L648.12,271.14 L646.87,271.27 L645.61,271.24 L565.01,263.89 L563.79,263.70 L562.68,263.35 L561.73,262.87 L560.98,262.29 L560.49,261.62 L560.26,260.90 L560.32,260.17 L560.65,259.47 L561.25,258.83 L562.08,258.29 L563.11,257.86 L564.27,257.57 L565.51,257.44 L566.77,257.47 Z M621.31,308.17 L622.29,308.63 L623.06,309.21 L623.59,309.87 L623.86,310.58 L623.84,311.31 L623.54,312.01 L622.97,312.66 L622.17,313.22 L621.17,313.67 L620.03,313.98 L618.79,314.13 L617.53,314.12 L616.30,313.94 L615.17,313.62 L546.73,288.03 L545.75,287.57 L544.98,286.99 L544.45,286.33 L544.18,285.62 L544.20,284.89 L544.50,284.19 L545.07,283.54 L545.87,282.98 L546.87,282.53 L548.02,282.23 L549.25,282.07 L550.52,282.08 L551.74,282.26 L552.87,282.58 Z M566.75,341.68 L567.31,342.33 L567.61,343.04 L567.63,343.77 L567.37,344.48 L566.84,345.14 L566.06,345.71 L565.09,346.17 L563.96,346.50 L562.73,346.67 L561.47,346.68 L560.23,346.53 L559.09,346.23 L558.09,345.78 L557.28,345.22 L512.84,305.82 L512.27,305.17 L511.97,304.46 L511.95,303.73 L512.22,303.02 L512.75,302.36 L513.52,301.79 L514.50,301.33 L515.63,301.00 L516.85,300.83 L518.12,300.82 L519.35,300.97 L520.50,301.27 L521.50,301.72 L522.30,302.28 Z M493.11,359.47 L493.17,360.20 L492.94,360.92 L492.45,361.58 L491.70,362.17 L490.75,362.65 L489.64,363.00 L488.42,363.19 L487.16,363.22 L485.92,363.09 L484.75,362.81 L483.73,362.38 L482.90,361.83 L482.30,361.19 L481.97,360.49 L469.20,314.09 L469.14,313.36 L469.37,312.65 L469.87,311.98 L470.61,311.39 L471.56,310.91 L472.67,310.57 L473.89,310.37 L475.15,310.34 L476.39,310.47 L477.56,310.75 L478.58,311.18 L479.41,311.73 L480.01,312.37 L480.34,313.07 Z M413.26,358.41 L412.79,359.08 L412.08,359.68 L411.16,360.18 L410.06,360.54 L408.86,360.76 L407.60,360.81 L406.35,360.70 L405.17,360.44 L404.13,360.03 L403.27,359.49 L402.63,358.86 L402.26,358.17 L402.17,357.44 L402.36,356.73 L423.48,311.35 L423.94,310.67 L424.65,310.07 L425.58,309.57 L426.67,309.21 L427.88,309.00 L429.14,308.94 L430.39,309.05 L431.56,309.32 L432.61,309.72 L433.47,310.26 L434.10,310.89 L434.47,311.58 L434.57,312.31 L434.38,313.03 Z M341.15,338.68 L340.25,339.19 L339.17,339.57 L337.98,339.80 L336.72,339.88 L335.47,339.79 L334.28,339.55 L333.21,339.16 L332.33,338.64 L331.66,338.02 L331.26,337.33 L331.12,336.61 L331.27,335.89 L331.70,335.20 L332.38,334.59 L383.74,298.08 L384.64,297.57 L385.71,297.18 L386.91,296.95 L388.16,296.87 L389.42,296.96 L390.61,297.21 L391.67,297.60 L392.56,298.12 L393.22,298.73 L393.63,299.42 L393.76,300.15 L393.61,300.87 L393.19,301.55 L392.51,302.17 Z M289.35,303.77 L288.17,304.02 L286.92,304.12 L285.66,304.05 L284.46,303.83 L283.37,303.46 L282.46,302.95 L281.77,302.35 L281.32,301.67 L281.15,300.95 L281.27,300.22 L281.66,299.53 L282.30,298.91 L283.18,298.38 L284.23,297.98 L356.94,276.65 L358.13,276.39 L359.38,276.30 L360.64,276.36 L361.84,276.59 L362.92,276.96 L363.84,277.46 L364.53,278.07 L364.98,278.75 L365.15,279.47 L365.03,280.20 L364.64,280.89 L363.99,281.51 L363.12,282.04 L362.07,282.44 Z M266.79,259.81 L265.53,259.76 L264.32,259.56 L263.21,259.20 L262.28,258.72 L261.55,258.12 L261.07,257.45 L260.86,256.73 L260.94,256.01 L261.29,255.31 L261.91,254.67 L262.75,254.13 L263.79,253.71 L264.95,253.44 L266.20,253.32 L347.70,250.86 L348.96,250.90 L350.17,251.11 L351.27,251.46 L352.21,251.95 L352.94,252.54 L353.42,253.22 L353.63,253.93 L353.55,254.66 L353.20,255.36 L352.58,255.99 L351.74,256.53 L350.70,256.95 L349.53,257.23 L348.29,257.35 Z M277.23,214.44 L276.10,214.11 L275.14,213.64 L274.38,213.05 L273.87,212.39 L273.62,211.68 L273.66,210.95 L273.98,210.25 L274.56,209.60 L275.38,209.04 L276.39,208.61 L277.54,208.31 L278.78,208.17 L280.05,208.19 L281.27,208.38 L357.46,225.21 L358.58,225.55 L359.54,226.02 L360.30,226.60 L360.81,227.26 L361.06,227.98 L361.02,228.71 L360.70,229.41 L360.12,230.05 L359.30,230.61 L358.29,231.05 L357.14,231.34 L355.90,231.48 L354.64,231.46 L353.41,231.28 Z M318.70,175.49 L317.91,174.92 L317.36,174.26 L317.08,173.55 L317.08,172.83 L317.36,172.12 L317.91,171.46 L318.70,170.89 L319.69,170.44 L320.82,170.13 L322.06,169.96 L323.32,169.96 L324.55,170.13 L325.69,170.44 L326.68,170.89 L384.38,204.11 L385.17,204.68 L385.72,205.34 L386.00,206.05 L386.00,206.77 L385.72,207.48 L385.17,208.14 L384.38,208.71 L383.39,209.16 L382.26,209.48 L381.02,209.64 L379.76,209.64 L378.53,209.48 L377.39,209.16 L376.40,208.71 Z M383.97,149.60 L383.66,148.89 L383.62,148.17 L383.86,147.45 L384.38,146.79 L385.13,146.21 L386.10,145.73 L387.22,145.40 L388.44,145.22 L389.70,145.20 L390.94,145.34 L392.10,145.63 L393.11,146.07 L393.93,146.62 L394.51,147.27 L423.75,191.13 L424.07,191.83 L424.11,192.56 L423.87,193.27 L423.35,193.94 L422.59,194.52 L421.63,194.99 L420.51,195.32 L419.29,195.51 L418.02,195.53 L416.78,195.39 L415.63,195.09 L414.62,194.66 L413.80,194.10 L413.22,193.46 Z" fill="none" stroke="#0e0e0e" stroke-width="1.6"/>
<path d="M454.3 251.4 H461.3 M457.8 247.9 V254.9" stroke="#3a9cf0" stroke-width="1"/>
</svg>
</body></html>
